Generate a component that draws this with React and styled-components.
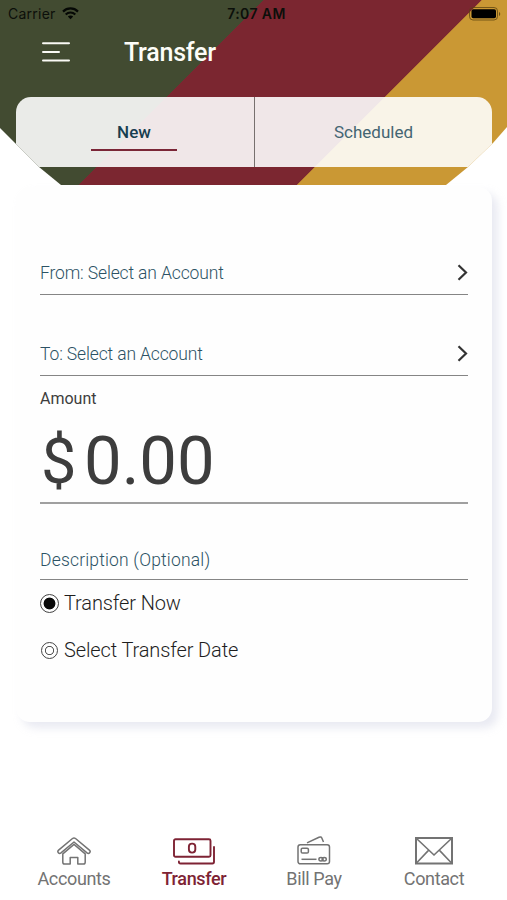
import React, { useState } from "react";
import styled, { createGlobalStyle } from "styled-components";

const GlobalStyle = createGlobalStyle`
  * {
    box-sizing: border-box;
  }
  body {
    margin: 0;
    background: #fff;
    font-family: Roboto, "Liberation Sans", sans-serif;
  }
  button {
    border: 0;
    padding: 0;
    background: none;
    font: inherit;
    text-align: left;
    cursor: pointer;
  }
`;

const tabs = ["New", "Scheduled"];
const accounts = ["From: Select an Account", "To: Select an Account"];
const options = [
  { id: "now", label: "Transfer Now" },
  { id: "date", label: "Select Transfer Date" },
];

function WifiIcon() {
  return (
    <svg width="17" height="13" viewBox="0 0 17 13" fill="none" stroke="#050805">
      <path d="M1 4.6C5.2.4 11.8.4 16 4.6" strokeWidth="2.2" />
      <path d="M3.7 7.4c2.7-2.6 6.9-2.6 9.6 0" strokeWidth="2.1" />
      <path d="M8.5 12.2 5.8 9.5c1.5-1.4 3.9-1.4 5.4 0z" fill="#050805" stroke="none" />
    </svg>
  );
}

function BatteryIcon() {
  return (
    <svg width="32" height="14" viewBox="0 0 32 14">
      <rect x=".5" y=".5" width="28" height="12.5" rx="3.5" fill="none" stroke="#59420f" strokeOpacity=".75" />
      <rect x="2.5" y="2.2" width="24.5" height="9" rx="1.8" fill="#000" />
      <path d="M30 5v4c1.7-.7 1.7-3.3 0-4z" fill="#6b5019" />
    </svg>
  );
}

function MenuIcon() {
  return (
    <svg width="28" height="20" viewBox="0 0 28 20" stroke="#fafaf5" strokeWidth="2" strokeLinecap="round">
      <path d="M1 1.2h26M1 9.9h16M1 18.4h26" />
    </svg>
  );
}

function ChevronIcon() {
  return (
    <svg width="11" height="17" viewBox="0 0 11 17" fill="none" stroke="#333" strokeWidth="2.2">
      <path d="m1.5 1.3 7.5 7.2-7.5 7.2" />
    </svg>
  );
}

function HouseIcon() {
  return (
    <svg width="34" height="28" viewBox="0 0 34 28" fill="none" stroke="currentColor" strokeWidth="1.5" strokeLinejoin="round">
      <path d="M15.5 1.5 1.6 13.1c-1.9 1.8.4 4.4 2.4 2.8L17 5l13 10.9c2 1.6 4.3-1 2.4-2.8L18.5 1.5c-1-.8-2-.8-3 0z" />
      <path d="M17 7.4 5.8 16.9v8.3c0 1.2.7 1.8 1.8 1.8h5.6v-6.500h7.6V27h5.600c1.1 0 1.800-.6 1.800-1.800v-8.300z" />
    </svg>
  );
}

function CashIcon() {
  return (
    <svg width="42" height="27" viewBox="0 0 42 27" fill="none" stroke="currentColor" strokeWidth="1.9" strokeLinejoin="round" strokeLinecap="round">
      <rect x="1" y="1.2" width="36.5" height="17.6" rx="1.5" />
      <rect x="15.9" y="5.6" width="6.4" height="9" rx="3.1" />
      <path d="M41 9v14.8c0 1-.6 1.7-1.6 1.7H7.5c-1 0-1.6-.5-1.6-1.5v-.6" />
    </svg>
  );
}

function CardsIcon() {
  return (
    <svg width="34" height="29" viewBox="0 0 34 29" fill="none" stroke="currentColor" strokeWidth="1.5">
      <path d="M10 6.9 22 1.2c1.3-.6 2.4-.2 2.9 1L26.5 6" />
      <rect x="1" y="8.8" width="31.5" height="19" rx="2.3" />
      <rect x="4.2" y="12.3" width="7.2" height="4.8" rx="1.3" />
      <path d="M4.5 23.3h15" />
      <ellipse cx="24" cy="23.2" rx="2.1" ry="1.7" />
      <ellipse cx="27.2" cy="23.2" rx="2.1" ry="1.7" />
    </svg>
  );
}

function MailIcon() {
  return (
    <svg width="38" height="28" viewBox="0 0 38 28" fill="none" stroke="currentColor">
      <rect x="1" y="1" width="36" height="25.5" strokeWidth="2" />
      <path d="m1.5 1.5 17.5 16.5L36.5 1.5M1.5 26 13.5 13.4M36.5 26 24.5 13.4" strokeWidth="1.6" />
    </svg>
  );
}

const navItems = [
  { label: "Accounts", icon: <HouseIcon /> },
  { label: "Transfer", icon: <CashIcon />, active: true },
  { label: "Bill Pay", icon: <CardsIcon /> },
  { label: "Contact", icon: <MailIcon /> },
];

function App() {
  const [tab, setTab] = useState("New");
  const [when, setWhen] = useState("now");

  return (
    <>
      <GlobalStyle />
      <Screen>
        <Header>
          <StatusBar>
            <div className="carrier">
              <span>Carrier</span>
              <WifiIcon />
            </div>
            <span className="time">7:07 AM</span>
            <div className="battery">
              <BatteryIcon />
            </div>
          </StatusBar>
          <TitleBar>
            <button aria-label="Menu">
              <MenuIcon />
            </button>
            <h1>Transfer</h1>
          </TitleBar>
          <Tabs>
            {tabs.map((name) => (
              <Tab key={name} $active={tab === name} onClick={() => setTab(name)}>
                <span>{name}</span>
              </Tab>
            ))}
          </Tabs>
        </Header>

        <Card>
          {accounts.map((label) => (
            <SelectRow key={label}>
              <span>{label}</span>
              <ChevronIcon />
            </SelectRow>
          ))}
          <Amount>
            <label>Amount</label>
            <div className="value">
              <span className="sign">$</span>
              <span>0.00</span>
            </div>
          </Amount>
          <Description>Description (Optional)</Description>
          <Options>
            {options.map((option) => (
              <Option key={option.id} onClick={() => setWhen(option.id)}>
                <Radio $checked={when === option.id} />
                <span>{option.label}</span>
              </Option>
            ))}
          </Options>
        </Card>

        <BottomNav>
          {navItems.map((item) => (
            <NavItem key={item.label} $active={item.active}>
              <div className="icon">{item.icon}</div>
              <span>{item.label}</span>
            </NavItem>
          ))}
        </BottomNav>
      </Screen>
    </>
  );
}

const Screen = styled.div`
  display: flex;
  flex-direction: column;
  width: 507px;
  height: 900px;
  overflow: hidden;
  background: #fff;
`;

const Header = styled.header`
  flex: none;
  height: 185px;
  background: linear-gradient(
    135deg,
    #424b31 186px,
    #7b2630 186.7px,
    #7b2630 340.3px,
    #ca9834 341px
  );
  clip-path: polygon(0 0, 100% 0, 100% 127px, 493px 143px, 468px 167px, 446px 185px, 61px 185px, 39px 167px, 15px 143px, 0 128px);
`;

const StatusBar = styled.div`
  display: grid;
  grid-template-columns: 1fr auto 1fr;
  align-items: center;
  height: 27px;
  padding: 0 6px 0 8px;
  font-family: Inter, "Liberation Sans", sans-serif;
  font-size: 14px;
  color: #0c0f0a;
  .carrier {
    display: flex;
    align-items: center;
    gap: 6px;
    letter-spacing: 0.25px;
  }
  .time {
    padding-left: 4px;
    font-weight: 600;
    letter-spacing: 0.4px;
  }
  .battery {
    display: flex;
    justify-content: flex-end;
  }
`;

const TitleBar = styled.div`
  display: flex;
  align-items: center;
  height: 70px;
  padding: 0 42px 20px;
  gap: 54px;
  button {
    display: flex;
  }
  h1 {
    margin: 1px 0 0;
    font-size: 25px;
    font-weight: 500;
    letter-spacing: -0.25px;
    color: #fdfdf8;
  }
`;

const Tabs = styled.div`
  display: grid;
  grid-template-columns: 238px 1fr;
  height: 70px;
  margin: 0 15px 0 16px;
  border-radius: 15px 15px 0 0;
  background: rgba(255, 255, 255, 0.89);
`;

const Tab = styled.button`
  display: flex;
  justify-content: center;
  color: ${(p) => (p.$active ? "#183e50" : "#446572")};
  font-size: 17px;
  font-weight: ${(p) => (p.$active ? 500 : 400)};
  &:first-child {
    padding-right: 2px;
  }
  & + & {
    border-left: 1px solid #77706e;
  }
  span {
    width: 86px;
    height: 54px;
    padding-top: 25px;
    line-height: 20px;
    text-align: center;
    border-bottom: 2px solid ${(p) => (p.$active ? "#7b2637" : "transparent")};
  }
`;

const Card = styled.main`
  flex: none;
  height: 535px;
  margin: 2px 15px 0 16px;
  padding: 27px 24px 0;
  border-radius: 14px;
  background: #fefefe;
  box-shadow: 6px 6px 8px rgba(195, 198, 220, 0.36);
`;

const SelectRow = styled.button`
  display: flex;
  align-items: flex-end;
  justify-content: space-between;
  width: 100%;
  height: 81px;
  padding-bottom: 11px;
  border-bottom: 1px solid #858585;
  font-size: 17.5px;
  font-weight: 300;
  letter-spacing: -0.14px;
  line-height: 20px;
  color: #2c5264;
  svg {
    margin-bottom: 2px;
  }
`;

const Amount = styled.div`
  height: 128px;
  padding-top: 13px;
  border-bottom: 2px solid #a0a0a0;
  color: #3d3d3d;
  label {
    display: block;
    font-size: 16px;
    line-height: 20px;
  }
  .value {
    display: flex;
    font-size: 67px;
    line-height: 78px;
    margin-top: 13px;
  }
  .sign {
    width: 44px;
    padding: 1px 0 0 1px;
    font-size: 63px;
  }
`;

const Description = styled.div`
  height: 76px;
  padding-top: 46px;
  border-bottom: 1px solid #858585;
  font-size: 17.5px;
  font-weight: 300;
  letter-spacing: 0.18px;
  line-height: 20px;
  color: #2c5264;
`;

const Options = styled.div`
  display: flex;
  flex-direction: column;
  gap: 23px;
  padding-top: 11px;
`;

const Option = styled.button`
  display: flex;
  align-items: center;
  gap: 5px;
  height: 24px;
  font-size: 20px;
  font-weight: 300;
  letter-spacing: -0.12px;
  color: #1e1e1e;
`;

const Radio = styled.span`
  display: grid;
  place-items: center;
  width: 19px;
  height: 19px;
  &::before {
    content: "";
    width: ${(p) => (p.$checked ? "17px" : "15px")};
    height: ${(p) => (p.$checked ? "17px" : "15px")};
    border: 1px solid #444;
    border-radius: 50%;
    background: ${(p) =>
      p.$checked
        ? "radial-gradient(circle, #0a0a0a 5.5px, transparent 6.3px)"
        : "radial-gradient(circle, transparent 3.3px, #555 4px, #555 4.2px, transparent 5px)"};
  }
`;

const BottomNav = styled.nav`
  display: grid;
  grid-template-columns: repeat(4, 120px);
  margin: 112px 0 0 14px;
`;

const NavItem = styled.button`
  display: flex;
  flex-direction: column;
  align-items: center;
  font-size: 18px;
  line-height: 22px;
  letter-spacing: -0.35px;
  color: ${(p) => (p.$active ? "#7e2334" : "#737373")};
  font-weight: ${(p) => (p.$active ? 500 : 400)};
  .icon {
    display: flex;
    align-items: flex-end;
    height: 31px;
    margin-bottom: 3px;
  }
`;

export default App;
